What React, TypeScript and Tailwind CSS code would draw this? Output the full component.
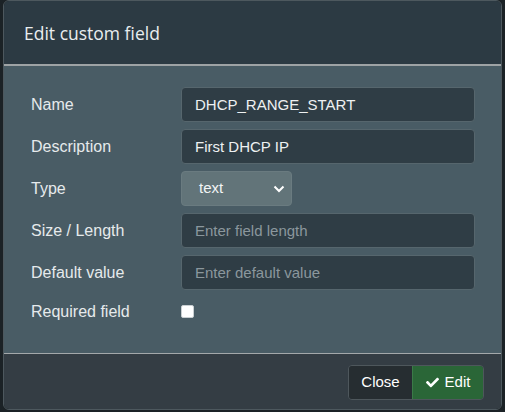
import { FaCheck } from "react-icons/fa";

interface RowProps {
  label: string;
  children: React.ReactNode;
}

const Row = ({ label, children }: RowProps) => (
  <div className="flex h-[35px] items-center">
    <label className="w-[150px] shrink-0 text-[16px] text-[#e6eaec]">{label}</label>
    {children}
  </div>
);

const inputCls =
  "h-full w-[294px] rounded-[4px] border border-[#56666d] bg-[#2f3d45] px-[13px] text-[15px] text-[#eef1f2] outline-none placeholder:text-[#8b979d]";

export default function App() {
  return (
    <div className="h-[412px] w-[505px] overflow-hidden bg-[#1b2226] pl-[3px] font-['Liberation_Sans',Arial,sans-serif]">
      <div className="flex h-[410px] w-[499px] flex-col overflow-hidden rounded-[6px] border border-[#4d585e]">
        <div className="flex h-[63px] shrink-0 items-center bg-[#2c3a43] px-[20px] pt-[1px] font-['Open_Sans',sans-serif] text-[17.5px] text-[#e9edef]">
          Edit custom field
        </div>
        <div className="h-[2px] shrink-0 bg-[#9ea3a5]" />
        <div className="flex h-[287px] shrink-0 flex-col gap-[7px] bg-[#495c65] pl-[27px] pt-[21px]">
          <Row label="Name">
            <input className={inputCls} defaultValue="DHCP_RANGE_START" />
          </Row>
          <Row label="Description">
            <input className={inputCls} defaultValue="First DHCP IP" />
          </Row>
          <Row label="Type">
            <div className="relative flex h-full w-[111px] items-center rounded-[4px] border border-[#6a7b80] bg-[#627479] pl-[17px] text-[15px] text-[#f2f4f5]">
              text
              <svg
                className="absolute right-[6px] top-[13px]"
                width="12"
                height="8"
                viewBox="0 0 12 8"
                fill="none"
                stroke="#ffffff"
                strokeWidth="2"
              >
                <path d="M1.5 1.5 L6 6 L10.5 1.5" />
              </svg>
            </div>
          </Row>
          <Row label="Size / Length">
            <input className={inputCls} placeholder="Enter field length" />
          </Row>
          <Row label="Default value">
            <input className={inputCls} placeholder="Enter default value" />
          </Row>
          <div className="flex h-[29px] items-center">
            <label className="w-[150px] shrink-0 text-[16px] text-[#e6eaec]">Required field</label>
            <div className="h-[13px] w-[13px] rounded-[2px] border border-[#c9cfd2] bg-white" />
          </div>
        </div>
        <div className="h-[1px] shrink-0 bg-[#a3a8aa]" />
        <div className="flex flex-1 items-start justify-end bg-[#343d44] pr-[17px] pt-[11px]">
          <div className="flex h-[35px] overflow-hidden rounded-[4px] border border-[#4e575c] text-[15px] text-white">
            <button className="flex h-full w-[63px] items-center justify-center bg-[#262d31]">Close</button>
            <button className="flex h-full w-[71px] items-center justify-center gap-[6px] border-l border-[#3b7a48] bg-[#2a6637]">
              <FaCheck className="h-[13px] w-[13px]" />
              Edit
            </button>
          </div>
        </div>
      </div>
    </div>
  );
}
